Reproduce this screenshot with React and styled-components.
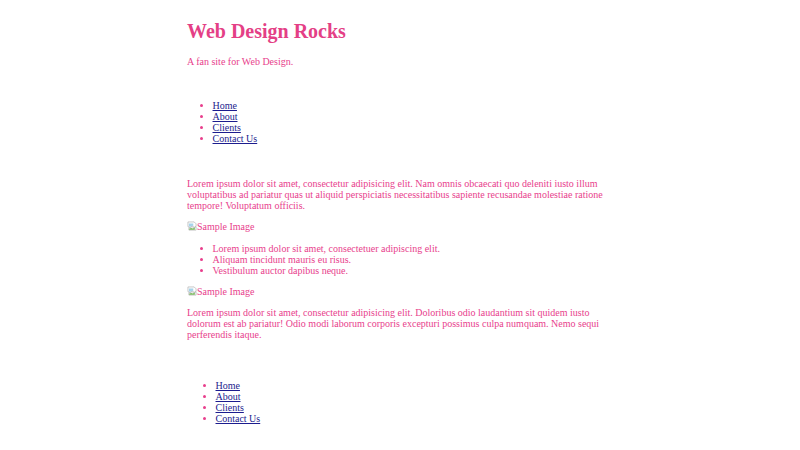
import React from "react";
import styled, { createGlobalStyle } from "styled-components";

const Global = createGlobalStyle`
  html, body { margin: 0; padding: 0; background: #ffffff; }
  body { font-family: "Liberation Serif", "Times New Roman", serif; font-size: 10px; color: #e83e8c; }
`;

const Page = styled.div`
  width: 426px;
  margin: 0 auto;
  padding-top: 7px;
`;

const Header = styled.header``;

const Title = styled.h1`
  font-size: 20px;
  font-weight: bold;
  margin: 13.4px 0 12.4px;
  color: #e43f86;
`;

const Tagline = styled.p`
  margin: 10px 0;
`;

const Nav = styled.nav`
  padding: ${(p) => (p.$footer ? "4px 3px" : "13px 0 14px")};
  margin-top: ${(p) => (p.$footer ? "26px" : "0")};
`;

const List = styled.ul`
  margin: ${(p) => (p.$content ? "11px 0 10px" : "10px 0")};
  padding-left: 25.5px;
  list-style: disc;
`;

const Item = styled.li`
  color: #e83e8c;
  line-height: normal;
`;

const Link = styled.a`
  color: #1c1c8e;
  text-decoration: underline;
`;

const Main = styled.main``;

const Text = styled.p`
  margin: 10px 0;
`;

const Figure = styled.p`
  margin: 10px 0;
  display: flex;
  align-items: center;
`;

const BrokenIcon = styled.svg`
  width: 10px;
  height: 10px;
  flex: none;
`;

const navItems = ["Home", "About", "Clients", "Contact Us"];

function NavList() {
  return (
    <List>
      {navItems.map((n) => (
        <Item key={n}>
          <Link href="#">{n}</Link>
        </Item>
      ))}
    </List>
  );
}

function SampleImage() {
  return (
    <Figure>
      <BrokenIcon viewBox="0 0 16 16" aria-hidden="true">
        <path d="M1.5 1.5h10l3 3v4l-3 1.5-3-2-3 2.5-4-1.5z" fill="#ffffff" stroke="#a8a8a8" strokeWidth="1" />
        <path d="M3 4h7v4.5l-2-1-3 2-2-1z" fill="#a6d3ea" />
        <path d="M3 10.5l2 .8 3-2.3 3 2 3.5-1.7v5.2h-11.5z" fill="#ffffff" stroke="#a8a8a8" strokeWidth="1" />
        <path d="M3.5 12.5l3-1.5 3 1 3-1.5v3.5h-9z" fill="#79bb5e" />
      </BrokenIcon>
      <span>Sample Image</span>
    </Figure>
  );
}

export default function App() {
  return (
    <>
      <Global />
      <Page>
        <Header>
          <Title>Web Design Rocks</Title>
          <Tagline>A fan site for Web Design.</Tagline>
        </Header>
        <Nav>
          <NavList />
        </Nav>
        <Main>
          <Text>
            Lorem ipsum dolor sit amet, consectetur adipisicing elit. Nam omnis obcaecati quo deleniti iusto illum
            voluptatibus ad pariatur quas ut aliquid perspiciatis necessitatibus sapiente recusandae molestiae ratione
            tempore! Voluptatum officiis.
          </Text>
          <SampleImage />
          <List $content>
            <Item>Lorem ipsum dolor sit amet, consectetuer adipiscing elit.</Item>
            <Item>Aliquam tincidunt mauris eu risus.</Item>
            <Item>Vestibulum auctor dapibus neque.</Item>
          </List>
          <SampleImage />
          <Text>
            Lorem ipsum dolor sit amet, consectetur adipisicing elit. Doloribus odio laudantium sit quidem iusto
            dolorum est ab pariatur! Odio modi laborum corporis excepturi possimus culpa numquam. Nemo sequi
            perferendis itaque.
          </Text>
        </Main>
        <Nav $footer>
          <NavList />
        </Nav>
      </Page>
    </>
  );
}
